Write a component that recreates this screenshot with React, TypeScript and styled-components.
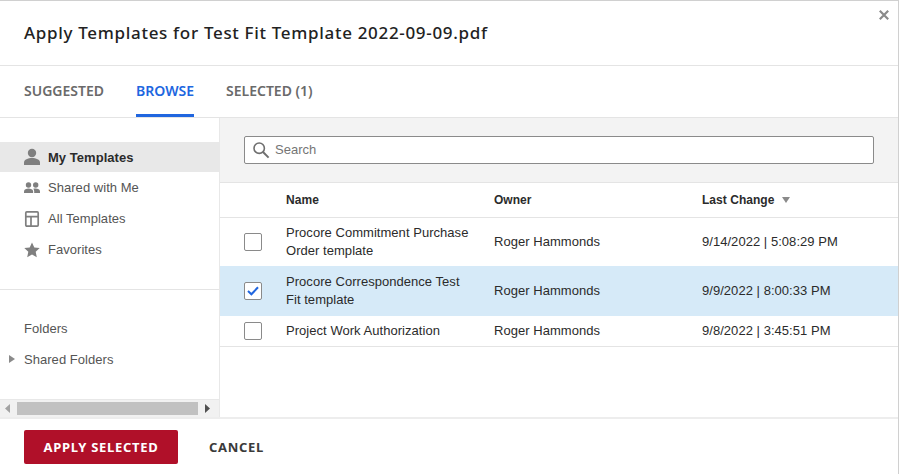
import styled, { createGlobalStyle } from "styled-components";

const templates = [
  { name: "Procore Commitment Purchase Order template", owner: "Roger Hammonds", changed: "9/14/2022 | 5:08:29 PM", selected: false },
  { name: "Procore Correspondence Test Fit template", owner: "Roger Hammonds", changed: "9/9/2022 | 8:00:33 PM", selected: true },
  { name: "Project Work Authorization", owner: "Roger Hammonds", changed: "9/8/2022 | 3:45:51 PM", selected: false },
];

const PersonIcon = () => (
  <svg width="18" height="18" viewBox="0 0 18 18" fill="#7f7f7f">
    <circle cx="9" cy="5" r="4.2" />
    <path d="M1 17v-2.6C1 11.6 5 10 9 10s8 1.6 8 4.4V17z" />
  </svg>
);

const PeopleIcon = () => (
  <svg width="18" height="18" viewBox="0 0 18 18" fill="#7f7f7f">
    <circle cx="5.5" cy="6" r="2.7" />
    <circle cx="12.7" cy="6" r="2.7" />
    <path d="M1 14v-1.6C1 10.6 3.4 9.6 5.5 9.6s4.6 1 4.6 2.8V14z" />
    <path d="M11.2 14v-1.8c0-1-.4-1.8-1-2.4.8-.2 1.7-.2 2.5-.2 2.2 0 4.3 1 4.3 2.8V14z" />
  </svg>
);

const LayoutIcon = () => (
  <svg width="18" height="18" viewBox="0 0 18 18" fill="none" stroke="#7f7f7f" strokeWidth="1.7">
    <rect x="2.8" y="1.9" width="12.4" height="14.2" rx="1" />
    <path d="M2.8 6.6h12.4M8 6.6v9.5" />
  </svg>
);

const StarIcon = () => (
  <svg width="18" height="18" viewBox="0 0 18 18" fill="#7f7f7f">
    <path d="M9 1.5l2.3 5 5.4.6-4 3.7 1.100 5.400L9 13.500l-4.800 2.700 1.100-5.400-4-3.700 5.400-.6z" />
  </svg>
);

const SearchIcon = () => (
  <svg width="18" height="18" viewBox="0 0 18 18" fill="none" stroke="#6f6f6f" strokeWidth="1.6">
    <circle cx="7.2" cy="7.2" r="5.2" />
    <path d="M11 11l5.6 5.600" strokeWidth="2" />
  </svg>
);

const CheckIcon = () => (
  <svg width="12" height="10" viewBox="0 0 12 10" fill="none" stroke="#2066df" strokeWidth="2">
    <path d="M1 5l3.400 3.300L11 1.300" />
  </svg>
);

const App = () => {
  return (
    <>
      <GlobalStyle />
      <Dialog>
        <Header>
          <Title>Apply Templates for Test Fit Template 2022-09-09.pdf</Title>
          <CloseButton aria-label="Close">
            <svg width="10" height="10" viewBox="0 0 10 10" stroke="#8a8a8a" strokeWidth="2.2">
              <path d="M.8.8l8.400 8.400M9.200.8L.8 9.200" />
            </svg>
          </CloseButton>
        </Header>
        <Tabs>
          <Tab>SUGGESTED</Tab>
          <Tab $active>BROWSE</Tab>
          <Tab>SELECTED (1)</Tab>
        </Tabs>
        <Body>
          <Sidebar>
            <SideNav>
              <NavItem $active>
                <PersonIcon />
                <span>My Templates</span>
              </NavItem>
              <NavItem>
                <PeopleIcon />
                <span>Shared with Me</span>
              </NavItem>
              <NavItem>
                <LayoutIcon />
                <span>All Templates</span>
              </NavItem>
              <NavItem>
                <StarIcon />
                <span>Favorites</span>
              </NavItem>
            </SideNav>
            <FolderList>
              <FolderRow>Folders</FolderRow>
              <FolderRow>
                <Caret />
                Shared Folders
              </FolderRow>
            </FolderList>
            <Scrollbar>
              <ScrollArrow $left />
              <ScrollThumb />
              <ScrollArrow />
            </Scrollbar>
          </Sidebar>
          <Main>
            <SearchBar>
              <SearchBox>
                <SearchIcon />
                <SearchInput placeholder="Search" />
              </SearchBox>
            </SearchBar>
            <TableHead>
              <CheckCell />
              <NameCell>Name</NameCell>
              <OwnerCell>Owner</OwnerCell>
              <ChangeCell>
                Last Change
                <SortCaret />
              </ChangeCell>
            </TableHead>
            {templates.map((t, i) => (
              <Row key={t.name} $selected={t.selected} $last={i === templates.length - 1}>
                <CheckCell>
                  <Checkbox>{t.selected && <CheckIcon />}</Checkbox>
                </CheckCell>
                <NameCell>{t.name}</NameCell>
                <OwnerCell>{t.owner}</OwnerCell>
                <ChangeCell>{t.changed}</ChangeCell>
              </Row>
            ))}
          </Main>
        </Body>
        <Footer>
          <ApplyButton>APPLY SELECTED</ApplyButton>
          <CancelButton>CANCEL</CancelButton>
        </Footer>
      </Dialog>
    </>
  );
};

export default App;

const GlobalStyle = createGlobalStyle`
  html, body {
    margin: 0;
    padding: 0;
    background: #fff;
  }
  body {
    font-family: "Liberation Sans", Arial, sans-serif;
    font-size: 13px;
    letter-spacing: 0.04px;
    color: #2b2b2b;
  }
`;
const Dialog = styled.div`
  width: 899px;
  height: 474px;
  box-sizing: border-box;
  border-top: 1px solid #d0d0d0;
  border-right: 1px solid #d0d0d0;
  display: flex;
  flex-direction: column;
  overflow: hidden;
`;
const Header = styled.header`
  position: relative;
  height: 65px;
  flex: none;
  box-sizing: border-box;
  display: flex;
  align-items: center;
  padding: 0 24px 2px;
  border-bottom: 1px solid #e4e4e4;
`;
const Title = styled.h1`
  margin: 0;
  font-family: "Noto Sans", sans-serif;
  font-size: 17px;
  font-weight: 500;
  letter-spacing: 0.68px;
  color: #222;
`;
const CloseButton = styled.button`
  position: absolute;
  top: 9px;
  right: 9px;
  padding: 0;
  border: 0;
  background: none;
  display: flex;
`;
const Tabs = styled.nav`
  height: 52px;
  flex: none;
  box-sizing: border-box;
  display: flex;
  gap: 32px;
  padding: 0 24px;
  border-bottom: 1px solid #e4e4e4;
`;
const Tab = styled.div<{ $active?: boolean }>`
  height: 51px;
  box-sizing: border-box;
  padding-top: 15px;
  font-family: "Noto Sans", sans-serif;
  font-size: 14px;
  font-weight: 600;
  line-height: 20px;
  letter-spacing: 0;
  color: ${(p) => (p.$active ? "#2066df" : "#6a6a6a")};
  border-bottom: 3px solid ${(p) => (p.$active ? "#2066df" : "transparent")};
`;
const Body = styled.div`
  flex: 1;
  min-height: 0;
  display: flex;
`;
const Sidebar = styled.aside`
  width: 220px;
  flex: none;
  box-sizing: border-box;
  border-right: 1px solid #e8e8e8;
  display: flex;
  flex-direction: column;
`;
const SideNav = styled.div`
  height: 172px;
  flex: none;
  box-sizing: border-box;
  padding-top: 24px;
  border-bottom: 1px solid #e4e4e4;
`;
const NavItem = styled.div<{ $active?: boolean }>`
  height: ${(p) => (p.$active ? 30 : 31)}px;
  display: flex;
  align-items: center;
  gap: 7px;
  padding-left: 23px;
  background: ${(p) => (p.$active ? "#e8e8e8" : "transparent")};
  font-weight: ${(p) => (p.$active ? 700 : 400)};
  color: ${(p) => (p.$active ? "#2b2b2b" : "#555")};
`;
const FolderList = styled.div`
  flex: 1;
  padding-top: 23px;
`;
const FolderRow = styled.div`
  position: relative;
  height: 31px;
  display: flex;
  align-items: center;
  padding-left: 24px;
  color: #555;
`;
const Caret = styled.i`
  position: absolute;
  left: 9px;
  top: 11px;
  border-left: 6px solid #8a8a8a;
  border-top: 4px solid transparent;
  border-bottom: 4px solid transparent;
`;
const Scrollbar = styled.div`
  height: 17px;
  flex: none;
  display: flex;
  align-items: center;
  background: #f1f1f1;
  border-top: 1px solid #e8e8e8;
`;
const ScrollArrow = styled.i<{ $left?: boolean }>`
  width: 17px;
  height: 9px;
  flex: none;
  display: block;
  background: ${(p) => (p.$left ? "#a3a3a3" : "#505050")};
  clip-path: ${(p) =>
    p.$left
      ? "polygon(5px 4.5px, 10px 0, 10px 9px)"
      : "polygon(7px 0, 12px 4.5px, 7px 9px)"};
`;
const ScrollThumb = styled.div`
  width: 181px;
  height: 13px;
  flex: none;
  background: #c1c1c1;
`;
const Main = styled.main`
  flex: 1;
  min-width: 0;
`;
const SearchBar = styled.div`
  height: 65px;
  box-sizing: border-box;
  padding: 18px 24px 0;
  background: #f3f3f3;
  border-bottom: 1px solid #e4e4e4;
`;
const SearchBox = styled.div`
  height: 28px;
  box-sizing: border-box;
  display: flex;
  align-items: center;
  gap: 5px;
  padding-left: 7px;
  background: #fff;
  border: 1px solid #8a8a8a;
  border-radius: 2px;
`;
const SearchInput = styled.input`
  flex: 1;
  border: 0;
  outline: 0;
  padding: 0 0 2px;
  background: transparent;
  font: inherit;
  &::placeholder {
    color: #757575;
    opacity: 1;
  }
`;
const TableHead = styled.div`
  height: 35px;
  box-sizing: border-box;
  display: flex;
  align-items: center;
  padding-bottom: 1px;
  font-size: 12px;
  font-weight: 700;
  border-bottom: 1px solid #e4e4e4;
`;
const Row = styled.div<{ $selected?: boolean; $last?: boolean }>`
  box-sizing: border-box;
  display: flex;
  align-items: center;
  padding: ${(p) => (p.$selected ? "7px 0" : "6px 0")};
  background: ${(p) => (p.$selected ? "#d6eaf8" : "#fff")};
  border-bottom: ${(p) => (p.$last ? "1px solid #e4e4e4" : "0")};
  line-height: 18px;
`;
const CheckCell = styled.div`
  width: 66px;
  flex: none;
  padding-left: 24px;
  box-sizing: border-box;
`;
const NameCell = styled.div`
  width: 208px;
  flex: none;
  padding-right: 20px;
  box-sizing: border-box;
`;
const OwnerCell = styled.div`
  width: 208px;
  flex: none;
`;
const ChangeCell = styled.div`
  flex: 1;
  display: flex;
  align-items: center;
  gap: 8px;
`;
const SortCaret = styled.i`
  border-top: 6px solid #8a8a8a;
  border-left: 4px solid transparent;
  border-right: 4px solid transparent;
`;
const Checkbox = styled.span`
  width: 18px;
  height: 18px;
  box-sizing: border-box;
  display: flex;
  align-items: center;
  justify-content: center;
  background: #fff;
  border: 1px solid #8a8a8a;
  border-radius: 2px;
`;
const Footer = styled.footer`
  height: 57px;
  flex: none;
  box-sizing: border-box;
  display: flex;
  align-items: center;
  gap: 31px;
  padding: 0 24px;
  border-top: 2px solid #ededed;
`;
const ApplyButton = styled.button`
  width: 154px;
  height: 34px;
  padding: 0;
  border: 0;
  border-radius: 2px;
  background: #b01029;
  color: #fff;
  font-family: "Noto Sans", sans-serif;
  font-size: 13px;
  font-weight: 700;
  letter-spacing: 0.7px;
`;
const CancelButton = styled.button`
  padding: 0;
  border: 0;
  background: none;
  color: #3a3a3a;
  font-family: "Noto Sans", sans-serif;
  font-size: 13px;
  font-weight: 700;
  letter-spacing: 0.7px;
`;
